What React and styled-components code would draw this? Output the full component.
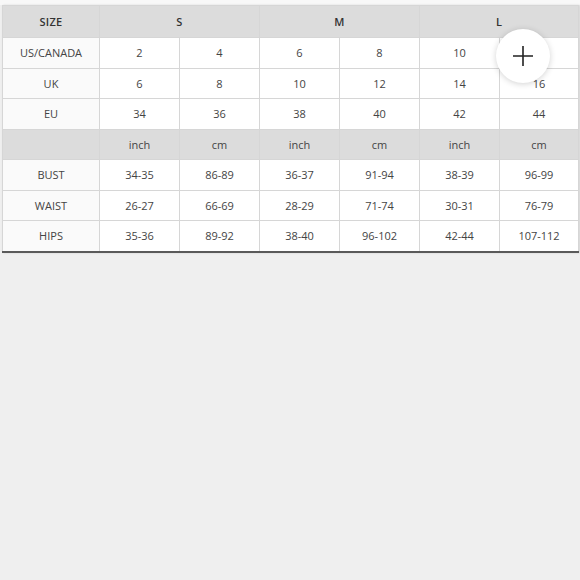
import styled, { createGlobalStyle } from "styled-components";

const Global = createGlobalStyle`
  html, body {
    margin: 0;
    padding: 0;
    background: #efefef;
  }
  body {
    font-family: "Open Sans", "Liberation Sans", sans-serif;
  }
`;

const Page = styled.div`
  position: relative;
  width: 580px;
  height: 580px;
  background: #efefef;
`;

const TopStrip = styled.div`
  height: 5px;
  background: #f8f8f8;
`;

const Sheet = styled.div`
  padding: 0 2px;
`;

const Table = styled.table`
  width: 576px;
  table-layout: fixed;
  border-collapse: collapse;
  background: #fff;
  border: 1px solid #cfcfcf;
  border-bottom: 2px solid #5a5a5a;
  box-shadow: 1px 0 2px rgba(0, 0, 0, 0.12);
`;

const Col = styled.col`
  width: ${(p) => p.$w}px;
`;

const Cell = styled.td`
  border: 1px solid #d6d6d6;
  text-align: center;
  vertical-align: middle;
  padding: 0;
  font-size: 11px;
  height: ${(p) => (p.$head ? "31px" : "29.5px")};
  background: ${(p) => (p.$shade ? "#dcdcdc" : p.$label ? "#fafafa" : "#fff")};
  font-weight: ${(p) => (p.$bold ? 600 : 400)};
  letter-spacing: ${(p) => (p.$bold ? "0.3px" : "0")};
  color: ${(p) => (p.$bold ? "#333" : "#444")};
`;

const Fab = styled.button`
  position: absolute;
  left: 496px;
  top: 29px;
  width: 54px;
  height: 54px;
  border-radius: 50%;
  border: none;
  background: #fff;
  box-shadow: 0 1px 6px rgba(0, 0, 0, 0.18);
  display: flex;
  align-items: center;
  justify-content: center;
  padding: 0;
`;

const widths = [97, 80, 80, 80, 80, 80, 79];

const sizes = [
  ["US/CANADA", "2", "4", "6", "8", "10", "12"],
  ["UK", "6", "8", "10", "12", "14", "16"],
  ["EU", "34", "36", "38", "40", "42", "44"],
];

const measures = [
  ["BUST", "34-35", "86-89", "36-37", "91-94", "38-39", "96-99"],
  ["WAIST", "26-27", "66-69", "28-29", "71-74", "30-31", "76-79"],
  ["HIPS", "35-36", "89-92", "38-40", "96-102", "42-44", "107-112"],
];

const units = ["inch", "cm", "inch", "cm", "inch", "cm"];

const DataRow = ({ row }) => (
  <tr>
    {row.map((v, i) => (
      <Cell key={i} $label={i === 0}>{v}</Cell>
    ))}
  </tr>
);

export default function App() {
  return (
    <Page>
      <Global />
      <TopStrip />
      <Sheet>
        <Table>
          <colgroup>
            {widths.map((w, i) => (
              <Col key={i} $w={w} />
            ))}
          </colgroup>
          <tbody>
            <tr>
              <Cell $head $shade $bold>SIZE</Cell>
              <Cell $head $shade $bold colSpan={2}>S</Cell>
              <Cell $head $shade $bold colSpan={2}>M</Cell>
              <Cell $head $shade $bold colSpan={2}>L</Cell>
            </tr>
            {sizes.map((row) => (
              <DataRow key={row[0]} row={row} />
            ))}
            <tr>
              <Cell $shade />
              {units.map((u, i) => (
                <Cell key={i} $shade>{u}</Cell>
              ))}
            </tr>
            {measures.map((row) => (
              <DataRow key={row[0]} row={row} />
            ))}
          </tbody>
        </Table>
      </Sheet>
      <Fab aria-label="Add">
        <svg width="22" height="22" viewBox="0 0 22 22">
          <path d="M11 1v20M1 11h20" stroke="#222" strokeWidth="1.6" fill="none" />
        </svg>
      </Fab>
    </Page>
  );
}
